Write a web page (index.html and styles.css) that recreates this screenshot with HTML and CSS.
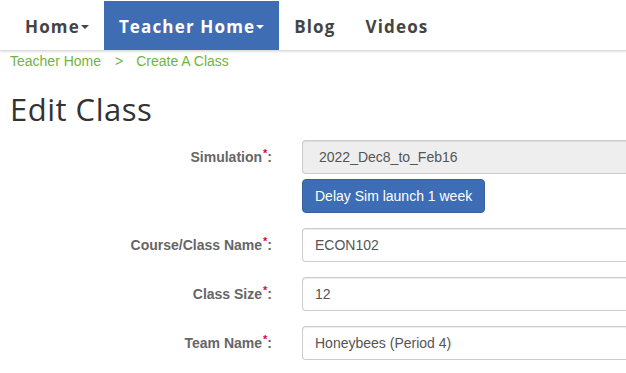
FILE: index.html
```html
<!DOCTYPE html>
<html>
<head>
<meta charset="utf-8">
<link rel="stylesheet" href="styles.css">
</head>
<body>
<nav class="navbar">
  <ul class="nav">
    <li class="nav-item">Home<span class="caret"></span></li>
    <li class="nav-item active">Teacher Home<span class="caret"></span></li>
    <li class="nav-item">Blog</li>
    <li class="nav-item">Videos</li>
  </ul>
</nav>
<div class="breadcrumb">
  <a class="crumb">Teacher Home</a>
  <span class="sep">&gt;</span>
  <a class="crumb">Create A Class</a>
</div>
<h1 class="title">Edit Class</h1>
<form class="form">
  <div class="row">
    <label class="label">Simulation<sup class="req">*</sup>:</label>
    <div class="field">
      <div class="input disabled">2022_Dec8_to_Feb16</div>
      <button type="button" class="btn">Delay Sim launch 1 week</button>
    </div>
  </div>
  <div class="row">
    <label class="label">Course/Class Name<sup class="req">*</sup>:</label>
    <div class="field"><div class="input">ECON102</div></div>
  </div>
  <div class="row">
    <label class="label">Class Size<sup class="req">*</sup>:</label>
    <div class="field"><div class="input">12</div></div>
  </div>
  <div class="row">
    <label class="label">Team Name<sup class="req">*</sup>:</label>
    <div class="field"><div class="input">Honeybees (Period 4)</div></div>
  </div>
</form>
</body>
</html>
```
FILE: styles.css
```css
html, body {
  margin: 0;
  padding: 0;
  background: #fff;
  overflow: hidden;
}
body {
  font-family: "Liberation Sans", Arial, sans-serif;
  font-size: 14px;
  color: #333;
}
.navbar {
  height: 50px;
  border-bottom: 1px solid #ddd;
  box-shadow: 0 1px 2px rgba(0,0,0,0.12);
}
.nav {
  list-style: none;
  margin: 0;
  padding: 1px 0 0 10px;
  display: flex;
  height: 49px;
}
.nav-item {
  display: flex;
  align-items: center;
  padding: 2px 15px 0;
  font-family: "Open Sans", sans-serif;
  font-weight: 700;
  font-size: 17px;
  letter-spacing: 1.15px;
  color: #444;
}
.nav-item.active {
  background: #3f6db4;
  color: #fff;
}
.caret {
  display: inline-block;
  width: 0;
  height: 0;
  margin-left: 1px;
  border-top: 4px solid currentColor;
  border-left: 4px solid transparent;
  border-right: 4px solid transparent;
}
.breadcrumb {
  padding: 0 10px;
  height: 20px;
  line-height: 20px;
  display: flex;
  gap: 13px;
}
.crumb { color: #72b33f; }
.sep { color: #72b33f; padding-left: 1px; }
.title {
  margin: 18px 0 0 10px;
  font-family: "Open Sans", sans-serif;
  font-weight: 500;
  font-size: 31px;
  letter-spacing: 0.5px;
  line-height: 40px;
  color: #333;
}
.form {
  margin-top: 11px;
  display: flex;
  flex-direction: column;
  gap: 15px;
}
.row {
  display: grid;
  grid-template-columns: 272px 1fr;
  column-gap: 30px;
}
.label {
  text-align: right;
  font-weight: 700;
  color: #666;
  padding-top: 8px;
  line-height: 18px;
}
.req {
  color: #e8003c;
  font-size: 11px;
  vertical-align: top;
  position: relative;
  top: -4px;
  margin-left: 1px;
}
.field {
  display: flex;
  flex-direction: column;
  align-items: flex-start;
  gap: 5px;
}
.input {
  box-sizing: border-box;
  width: 100%;
  height: 34px;
  border: 1px solid #ccc;
  border-right: none;
  border-radius: 4px 0 0 4px;
  padding: 0 12px;
  line-height: 32px;
  color: #555;
  background: #fff;
  box-shadow: inset 0 1px 1px rgba(0,0,0,0.075);
}
.input.disabled {
  background: #eee;
  padding-left: 16px;
}
.btn {
  height: 34px;
  padding: 0 12px;
  border: 1px solid #37619f;
  border-radius: 4px;
  background: #3d6db5;
  color: #fff;
  font-family: "Liberation Sans", Arial, sans-serif;
  font-size: 14px;
}
```
